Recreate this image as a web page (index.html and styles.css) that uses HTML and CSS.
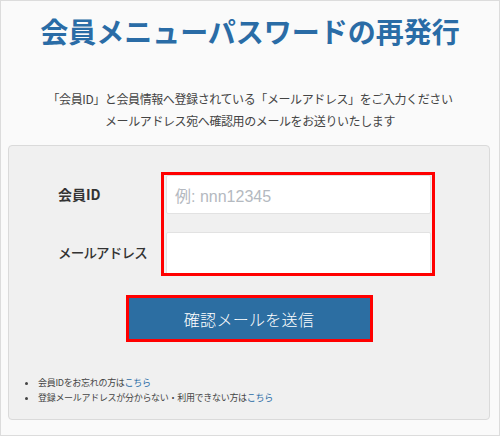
FILE: index.html
```html
<!DOCTYPE html>
<html lang="ja">
<head>
<meta charset="utf-8">
<link rel="stylesheet" href="styles.css">
</head>
<body>
<div class="page">
  <h1 class="title">会員メニューパスワードの再発行</h1>
  <p class="lead">「会員ID」と会員情報へ登録されている「メールアドレス」をご入力ください<br>メールアドレス宛へ確認用のメールをお送りいたします</p>
  <div class="panel">
    <div class="form">
      <div class="labels">
        <div class="label label-id">会員ID</div>
        <div class="label label-mail">メールアドレス</div>
      </div>
      <div class="fields">
        <div class="input"><span class="placeholder">例: nnn12345</span></div>
        <div class="input input-last"></div>
      </div>
    </div>
    <div class="actions">
      <button class="submit">確認メールを送信</button>
    </div>
    <ul class="notes">
      <li>会員IDをお忘れの方は<a href="#">こちら</a></li>
      <li>登録メールアドレスが分からない・利用できない方は<a href="#">こちら</a></li>
    </ul>
  </div>
</div>
</body>
</html>
```
FILE: styles.css
```css
* { box-sizing: border-box; }
html, body { margin: 0; padding: 0; }
body {
  width: 500px;
  height: 436px;
  overflow: hidden;
  font-family: "Noto Sans CJK JP", "Noto Sans", sans-serif;
  color: #444;
}
.page {
  width: 500px;
  height: 436px;
  border: 1px solid #dcdcdc;
  background: #fafafa;
  padding-top: 10px;
}
.title {
  margin: 0;
  font-size: 28px;
  line-height: 40px;
  font-weight: 700;
  color: #2a6ca6;
  text-align: center;
  letter-spacing: 0;
}
.lead {
  margin: 37px 0 0;
  font-size: 12px;
  line-height: 22px;
  color: #444;
  text-align: center;
  letter-spacing: -0.4px;
}
.panel {
  margin: 13px 0 0 7px;
  width: 482px;
  height: 275px;
  background: #f0f0f0;
  border: 1px solid #dadada;
  border-radius: 4px;
  padding-top: 26px;
}
.form {
  display: flex;
  padding-left: 152px;
  position: relative;
}
.labels {
  position: absolute;
  left: 49px;
  top: 0;
}
.label {
  font-size: 14px;
  font-weight: 700;
  color: #333;
  height: 20px;
  line-height: 20px;
  white-space: nowrap;
}
.label-id { margin-top: 12px; }
.label-mail { margin-top: 38px; font-size: 13.5px; font-weight: 500; letter-spacing: -0.8px; }
.fields {
  width: 274px;
  height: 104px;
  border: 3px solid #ff0000;
  padding: 0 1px 0 2px;
  display: flex;
  flex-direction: column;
  gap: 18px;
  overflow: hidden;
}
.input {
  height: 39px;
  background: #fff;
  border: 1px solid #e2e2e2;
  border-radius: 2px;
  display: flex;
  align-items: center;
  padding-left: 8px;
  flex-shrink: 0;
}
.input-last { height: 44px; }
.placeholder {
  font-family: "Liberation Sans", "Noto Sans CJK JP", sans-serif;
  font-size: 16px;
  color: #b4b9c0;
}
.actions {
  display: flex;
  justify-content: center;
  margin-top: 19px;
}
.submit {
  width: 247px;
  height: 47px;
  border: 3px solid #ff0000;
  background: #2c6ea2;
  color: #fff;
  font-family: "Noto Sans CJK JP", sans-serif;
  font-size: 16px;
  font-weight: 300;
  padding: 0;
  letter-spacing: 0.3px;
}
.notes {
  margin: 33px 0 0;
  padding: 0 0 0 29px;
  font-size: 9px;
  line-height: 15px;
  color: #444;
  letter-spacing: -0.3px;
}
.notes li { padding-left: 0; }
.notes a { color: #2a6ca6; text-decoration: none; }
```
